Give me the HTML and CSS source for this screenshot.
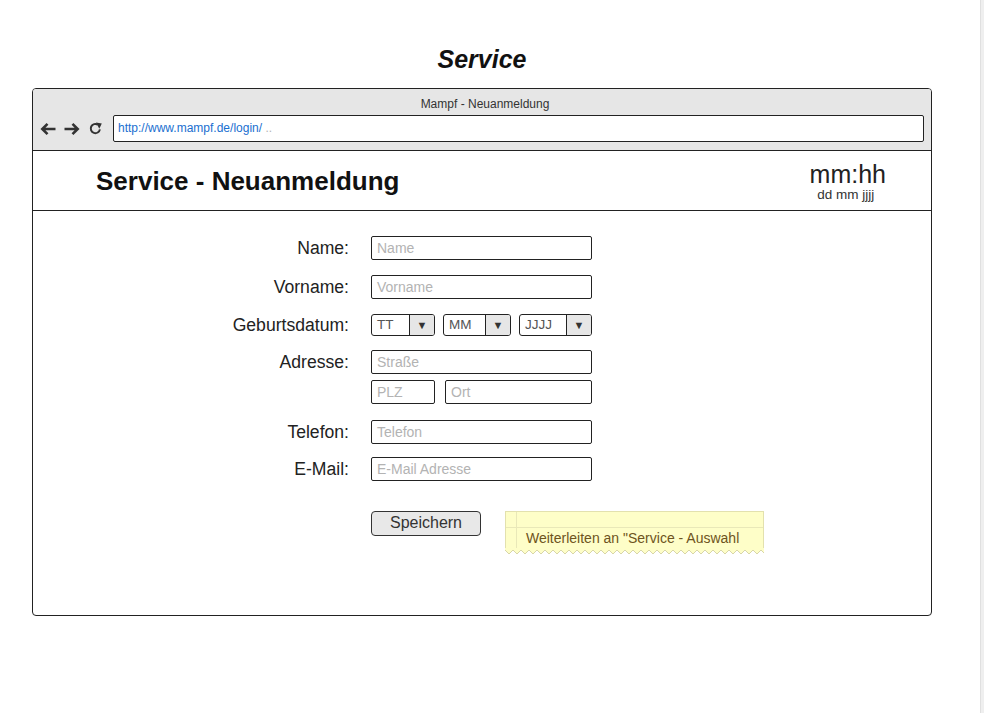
FILE: index.html
```html
<!DOCTYPE html>
<html lang="de">
<head>
<meta charset="utf-8">
<title>Service</title>
<link rel="stylesheet" href="styles.css">
</head>
<body>
<div class="page">
  <h1 class="page-title">Service</h1>
  <div class="window">
    <div class="chrome">
      <div class="chrome-title">Mampf - Neuanmeldung</div>
      <div class="nav">
        <svg class="ico" width="16" height="14" viewBox="0 0 16 14"><path d="M15.5 7H2.5M7.5 1.8L2.3 7l5.2 5.2" fill="none" stroke="#333" stroke-width="2.6"/></svg>
        <svg class="ico" width="16" height="14" viewBox="0 0 16 14"><path d="M0.5 7h13M8.5 1.8L13.7 7l-5.2 5.2" fill="none" stroke="#333" stroke-width="2.6"/></svg>
        <svg class="ico reload" width="13" height="13" viewBox="0 0 13 13"><path d="M10.9 7.4A4.6 4.6 0 1 1 8.9 2.7" fill="none" stroke="#333" stroke-width="2"/><path d="M7 0.4L12.8 1.6 10.3 6.8z" fill="#333"/></svg>
        <div class="urlbar">http://www.mampf.de/login/<span class="url-dots"> ..</span></div>
      </div>
    </div>
    <div class="header">
      <div class="header-title">Service - Neuanmeldung</div>
      <div class="clock">
        <div class="clock-time">mm:hh</div>
        <div class="clock-date">dd mm jjjj</div>
      </div>
    </div>
    <div class="content">
      <div class="row r1">
        <div class="label">Name:</div>
        <div class="field wide">Name</div>
      </div>
      <div class="row r2">
        <div class="label">Vorname:</div>
        <div class="field wide">Vorname</div>
      </div>
      <div class="row r3">
        <div class="label sel-label">Geburtsdatum:</div>
        <div class="selects">
          <div class="select s-tt"><span class="sel-text">TT</span><span class="sel-btn">&#9660;</span></div>
          <div class="select s-mm"><span class="sel-text">MM</span><span class="sel-btn">&#9660;</span></div>
          <div class="select s-jj"><span class="sel-text">JJJJ</span><span class="sel-btn">&#9660;</span></div>
        </div>
      </div>
      <div class="row r4">
        <div class="label">Adresse:</div>
        <div class="addr">
          <div class="field wide">Straße</div>
          <div class="addr-line">
            <div class="field plz">PLZ</div>
            <div class="field ort">Ort</div>
          </div>
        </div>
      </div>
      <div class="row r5">
        <div class="label">Telefon:</div>
        <div class="field wide">Telefon</div>
      </div>
      <div class="row r6">
        <div class="label">E-Mail:</div>
        <div class="field wide">E-Mail Adresse</div>
      </div>
      <div class="row r7">
        <div class="label"></div>
        <div class="button">Speichern</div>
        <div class="note">
          <div class="note-body"><span class="note-text">Weiterleiten an "Service - Auswahl</span></div>
          <div class="note-zig"></div>
        </div>
      </div>
    </div>
  </div>
</div>
<div class="scrollbar"></div>
</body>
</html>
```

FILE: styles.css
```css
* { box-sizing: border-box; }
html, body { margin: 0; padding: 0; }
body {
  display: flex;
  width: 984px;
  height: 713px;
  overflow: hidden;
  background: #fff;
  font-family: "Liberation Sans", Arial, sans-serif;
  color: #222;
}
.page { width: 980px; }
.scrollbar {
  width: 4px;
  height: 713px;
  background: #efefef;
  border-left: 1px solid #e0e0e0;
}
.page-title {
  margin: 0;
  padding-top: 44px;
  padding-right: 16px;
  font-size: 25px;
  line-height: 30px;
  font-weight: bold;
  font-style: italic;
  text-align: center;
  color: #111;
}
.window {
  margin: 14px 0 0 32px;
  width: 900px;
  height: 528px;
  border: 1px solid #222;
  border-radius: 4px;
  display: flex;
  flex-direction: column;
}
.chrome {
  background: #e6e6e6;
  border-bottom: 1px solid #222;
  border-radius: 3px 3px 0 0;
  padding: 8px 7px 8px 7px;
}
.chrome-title {
  font-size: 12px;
  line-height: 14px;
  text-align: center;
  color: #333;
  padding-left: 6px;
}
.nav {
  margin-top: 4px;
  display: flex;
  align-items: center;
}
.ico { display: block; }
.nav .ico:first-child { margin-right: 8px; }
.nav .ico:nth-child(2) { margin-right: 9px; }
.reload { margin-right: 11px; }
.urlbar {
  flex: 1;
  height: 27px;
  background: #fff;
  border: 1px solid #222;
  border-radius: 2px;
  font-size: 12px;
  line-height: 25px;
  padding-left: 4px;
  color: #1a6fd0;
}
.url-dots { color: #b5b5b5; }
.header {
  height: 60px;
  border-bottom: 1px solid #222;
  display: flex;
  align-items: center;
  justify-content: space-between;
  padding: 0 45px 0 63px;
}
.header-title {
  font-size: 26px;
  font-weight: bold;
  line-height: 30px;
  color: #111;
}
.clock { text-align: center; padding-top: 2px; }
.clock-time { font-size: 25px; line-height: 25px; color: #222; }
.clock-date { font-size: 13.5px; line-height: 15px; color: #333; padding-right: 4px; }
.content {
  flex: 1;
  padding-top: 25px;
}
.row {
  display: flex;
  align-items: flex-start;
  gap: 22px;
}
.label {
  width: 316px;
  text-align: right;
  font-size: 17.6px;
  line-height: 24px;
  color: #222;
  flex: none;
}
.sel-label { line-height: 22px; }
.r2 { margin-top: 15px; }
.r3 { margin-top: 15px; }
.r4 { margin-top: 14px; }
.r5 { margin-top: 16px; }
.r6 { margin-top: 13px; }
.r7 { margin-top: 30px; }
.field {
  height: 24px;
  border: 1px solid #222;
  border-radius: 2px;
  font-size: 14px;
  line-height: 22px;
  padding-left: 5px;
  color: #b3b3b3;
  background: #fff;
}
.wide { width: 221px; }
.addr { display: flex; flex-direction: column; gap: 6px; }
.addr-line { display: flex; gap: 10px; }
.plz { width: 64px; }
.ort { width: 147px; }
.selects { display: flex; gap: 8px; }
.select {
  height: 22px;
  border: 1px solid #222;
  border-radius: 3px;
  display: flex;
  background: #fff;
  overflow: hidden;
}
.s-tt { width: 64px; }
.s-mm { width: 68px; }
.s-jj { width: 73px; }
.sel-text {
  flex: 1;
  font-size: 13.5px;
  line-height: 20px;
  padding-left: 5px;
  color: #555;
}
.sel-btn {
  width: 25px;
  background: #e6e6e6;
  border-left: 1px solid #222;
  font-size: 11px;
  line-height: 20px;
  text-align: center;
  color: #333;
}
.button {
  width: 110px;
  height: 25px;
  border: 1px solid #333;
  border-radius: 4px;
  background: #e8e8e8;
  font-size: 16px;
  line-height: 21px;
  text-align: center;
  color: #333;
  flex: none;
}
.note {
  margin-left: 2px;
  width: 259px;
}
.note-body {
  height: 37px;
  background: #fefec8;
  border: 1px solid #e3e1ae;
  border-bottom: none;
  background-image:
    linear-gradient(#e9e8b8, #e9e8b8),
    linear-gradient(#e9e8b8, #e9e8b8);
  background-size: 1px 100%, 100% 1px;
  background-position: 10px 0, 0 15px;
  background-repeat: no-repeat;
  padding: 18px 0 0 20px;
}
.note-text {
  font-size: 14px;
  line-height: 16px;
  color: #6e5420;
  display: block;
}
.note-zig {
  height: 6px;
  background:
    conic-gradient(from -45deg at 50% 100%, #fefec8 90deg, transparent 0) 0 -1px / 8px 6px repeat-x,
    conic-gradient(from -45deg at 50% 100%, #d8d6a8 90deg, transparent 0) 0 0 / 8px 6px repeat-x;
}
```
